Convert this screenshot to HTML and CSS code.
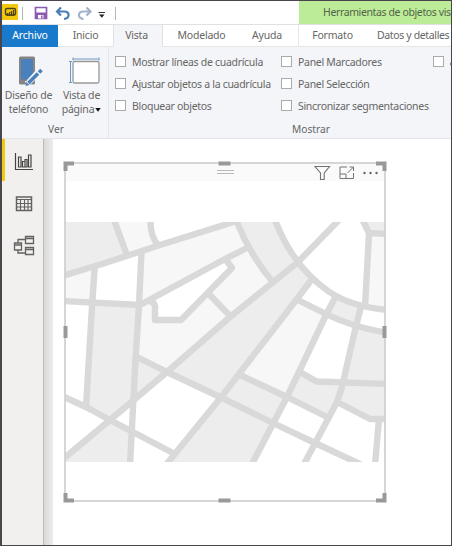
FILE: index.html
```html
<!DOCTYPE html>
<html lang="es">
<head>
<meta charset="utf-8">
<title>Vista de informe</title>
<link rel="stylesheet" href="styles.css">
</head>
<body>
<div class="window">
  <header class="titlebar">
    <div class="quick">
      <svg width="118" height="24" viewBox="0 0 118 24">
        <rect x="0" y="3" width="16" height="16" fill="#f2c811"/>
        <rect x="3.500" y="7.500" width="10" height="6.500" rx="1.500" fill="none" stroke="#4b4216" stroke-width="1.400"/>
        <path d="M5.500 15V12M7.500 15V11M9.500 15V10M11.500 15V9" stroke="#4b4216" stroke-width="1.300"/>
        <path d="M20.500 6v13M113.500 6v13" stroke="#b5b5b5"/>
        <path d="M33.500 6.500h11v11h-11z" fill="#fff" stroke="#8b5bb0" stroke-width="1.700"/>
        <path d="M33.500 11.500h11v6h-11z" fill="#8b5bb0"/><path d="M36 14h5.500v3.500H36z" fill="#fff"/><path d="M39 14.500h1.500v3H39z" fill="#8b5bb0"/>
        <path d="M59 6.500L55 10.500L59 14.500M55.500 10.500H62.500C68 10.500 68 17.500 62 18" fill="none" stroke="#4a7fb5" stroke-width="2.200"/>
        <path d="M84.500 6.500L88.500 10.500L84.500 14.500M88 10.500H81C75.500 10.500 75.500 17.500 81.500 18" fill="none" stroke="#a3b3c9" stroke-width="2.200"/>
        <path d="M96.500 11.500h6.500" stroke="#333"/><path d="M97 13.500h5.500l-2.700 3.300z" fill="#222"/>
      </svg>
    </div>
    <div class="context">Herramientas de objetos vis</div>
  </header>
  <nav class="tabs">
    <span class="tab file">Archivo</span>
    <span class="tab home">Inicio</span>
    <span class="tab view">Vista</span>
    <span class="tab model">Modelado</span>
    <span class="tab help">Ayuda</span>
    <span class="tab format">Formato</span>
    <span class="tab data">Datos y detalles</span>
  </nav>
  <section class="ribbon">
    <div class="group see">
      <div class="bigs">
        <div class="big phone">
          <svg width="28" height="34" viewBox="0 0 28 34">
            <rect x="4" y="2.500" width="16" height="28" rx="1.500" fill="#858585"/>
            <rect x="6" y="5" width="12" height="20.500" fill="#4a80bb"/>
            <rect x="10" y="27" width="4" height="1.500" fill="#ddd"/>
            <path d="M10 33l2-7L23 14l5 4L16 30z" fill="#f4f5f8"/>
            <path d="M13.500 29L23 19.500" stroke="#4a80bb" stroke-width="3.600"/><path d="M24 18.500l2.500-2.500" stroke="#4a80bb" stroke-width="3.600"/><path d="M10.500 32l1-4 3 3z" fill="#4a80bb"/>
          </svg>
          <span>Diseño de</span><span>teléfono</span>
        </div>
        <div class="big page">
          <svg class="pageicon" width="32" height="34" viewBox="0 0 32 34">
            <rect x="4" y="7.500" width="26" height="21.500" rx="1.500" fill="#fff" stroke="#999" stroke-width="1.300"/>
            <path d="M4 5h26M4 3.500v3M30 3.500v3M1.500 7.500v21M0 7.500h3M0 28.500h3" stroke="#6a98c8"/>
          </svg>
          <span>Vista de</span><span class="drop">página<svg class="caret" width="6" height="4" viewBox="0 0 6 4"><path d="M.3 0h5.400L3 3.700z" fill="#111"/></svg></span>
        </div>
      </div>
      <div class="caption ver">Ver</div>
    </div>
    <div class="group show">
      <div class="checks">
        <div class="col">
          <label><b></b><i>Mostrar líneas de cuadrícula</i></label>
          <label><b></b><i>Ajustar objetos a la cuadrícula</i></label>
          <label><b></b><i>Bloquear objetos</i></label>
        </div>
        <div class="col second">
          <label><b></b><i>Panel Marcadores</i></label>
          <label><b></b><i>Panel Selección</i></label>
          <label><b></b><i>Sincronizar segmentaciones</i></label>
        </div>
        <div class="col third"><label><b></b><svg width="3" height="10" viewBox="0 0 3 10"><path d="M-.5 9L2 4" stroke="#666"/></svg></label></div>
      </div>
      <div class="caption mostrar">Mostrar</div>
    </div>
  </section>
  <main class="body">
    <aside class="rail">
      <div class="item active">
        <svg width="20" height="20" viewBox="0 0 20 20" fill="none" stroke="#444" stroke-width="1.200"><path d="M1.500 1v16.500H19"/><path d="M4.500 5h2.500v10H4.500zM8.500 9.500H11V15H8.500zM11 7.500h2V15h-2zM14.500 3H17v12h-2.500z"/></svg>
      </div>
      <div class="item">
        <svg width="20" height="20" viewBox="0 0 20 20" fill="none" stroke="#626262"><path d="M2.500 3h15v13.500h-15z" stroke-width="1.500"/><path d="M2.500 5.500h15M2.500 9.500h15M2.500 13h15M6.500 5.500v11M10.500 5.500v11M14 5.500v11" stroke-width="1.100"/></svg>
      </div>
      <div class="item">
        <svg width="22" height="22" viewBox="0 0 22 22" fill="none" stroke="#626262" stroke-width="1.300"><path d="M1.500 8h7v7h-7zM1.500 10h7M12.500 1.500h8v7h-8zM12.500 3.500h8M12.500 12.500h8v7h-8zM12.500 14.500h8M5 8V4.500h7.500M5 15v3h7.500"/></svg>
      </div>
    </aside>
    <div class="gutter"></div>
    <div class="canvas">
      <div class="visual">
        <div class="vhead">
          <div class="grip"></div>
          <svg class="tools" width="66" height="16" viewBox="0 0 66 16" fill="none" stroke="#737373">
            <path d="M1 1.500h14.500L10.200 8v6.500H6.500V8z" stroke-width="1.100"/>
            <path d="M33 2H26v11.500h13.500V8M35.500 2h4v4M39.200 2.300L33.500 8M26 9h6v4.500"/>
            <g fill="#666" stroke="none"><circle cx="50.500" cy="8" r="1.200"/><circle cx="56.500" cy="8" r="1.200"/><circle cx="62.500" cy="8" r="1.200"/></g>
          </svg>
        </div>
        <svg class="map" width="320" height="240" viewBox="65 222 320 240">
          <g fill="#ededed">
            <path d="M65 222h50l12 33L65 275z"/>
            <path d="M92 305L139 305L133 400L110 420L86 407z"/>
            <path d="M65 458L110 420L131 432L130 462H65z"/>
            <path d="M136 358L167 372L134 400z"/>
            <path d="M237 222H275L297 263L272 281L248 248z"/>
            <path d="M297 263L312 280L220 397L167 372z"/>
            <path d="M240 374L287 397L273 423L220 397z"/>
            <path d="M220 397L273 423L253 462H167z"/>
            <path d="M335 297L361 307L357 327L327 314z"/>
            <path d="M357 327L385 333V384L342 383z"/>
            <path d="M301 373L317 381L342 382L337 402L327 417L287 397z"/>
            <path d="M342 383L385 384V419H370L337 402z"/>
            <path d="M363 222H385V234L369 233z"/>
          </g>
          <g fill="#f7f7f7">
            <path d="M115 222H150L157 244L127 255z"/>
            <path d="M65 275L94 267L92 305L65 301z"/>
            <path d="M142 251L235 222L248 248L140 305z"/>
            <path d="M140 305L153 302L155 320H181L208 293L230 317L167 372L136 358z"/>
            <path d="M227 260L248 248L272 281L232 316L208 293L233 268z"/>
            <path d="M300 300L327 313L287 397L240 374L288 310z"/>
            <path d="M369 233L385 234V310L365 307z"/>
          </g>
          <g fill="none" stroke="#d9d9d9" stroke-width="6.400" stroke-linejoin="round">
            <path d="M62 276L102 264L160 245L240 220"/>
            <path d="M114 220L127 255"/>
            <path d="M150.500 220Q150 236 158 245"/>
            <path d="M141.500 252L139 305L135.500 360L130 465"/>
            <path d="M94.700 267L92 307L86 407"/>
            <path d="M62 301L140 305L225 259L247 248"/>
            <path d="M150 301Q156 303 155 309V320H181L232 268L226 260"/>
            <path d="M208 293L231 317"/>
            <path d="M236 220Q250 255 272 281"/>
            <path d="M275 220C286 249 304 274 328 291C344 302 364 308 388 310"/>
            <path d="M339 220L297 263L272 283L230 317L167 372L110 420L62 460"/>
            <path d="M312 279L297 299L222 396L165 466"/>
            <path d="M362 219L369 233L365 307M369 233L388 234"/>
            <path d="M361 307L355 330L342 387L337 402L303 466"/>
            <path d="M298 300L326 314Q352 327 388 333"/>
            <path d="M336 296L327 313L287 397L251 466"/>
            <path d="M300 372L316.500 381.500L388 384"/>
            <path d="M240 375L287 397L327 417"/>
            <path d="M137 357L167 372L220 397L273 423L315 443L362 465"/>
            <path d="M337 402L370 419H388"/>
            <path d="M379 419L375 465"/>
            <path d="M62 396L86 407L110 420L173 453"/>
          </g>
        </svg>
        <svg class="frame" width="324" height="342" viewBox="0 0 324 342">
          <rect x="2" y="2" width="320" height="338" fill="none" stroke="#cfcfcf" stroke-width="1.700"/>
          <path d="M2.500 10V2.500H11M313 2.500h8.500V10M321.500 332v7.500H313M11 339.500H2.500V332M155.500 2.500h12M155.500 339.500h12M2.500 165v12M321.500 165v12" fill="none" stroke="#999" stroke-width="4"/>
        </svg>
      </div>
    </div>
  </main>
</div>
</body>
</html>
```
FILE: styles.css
```css
* { box-sizing: border-box; }
body { margin: 0; background: #fff; font-family: "Noto Sans", "Open Sans", sans-serif; font-size: 10.500px; letter-spacing: -.2px; color: #666; }
i { font-style: normal; white-space: nowrap; }
svg { display: block; flex: none; }
.window { width: 452px; height: 546px; border: 1px solid #48464a; border-left-width: 2px; overflow: hidden; display: flex; flex-direction: column; }
.titlebar { height: 23px; display: flex; flex: none; }
.quick { width: 297px; height: 23px; flex: none; }
.context { flex: 1; background: #bdec98; padding-left: 24px; line-height: 23px; white-space: nowrap; color: #526449; letter-spacing: -.38px; }
.tabs { height: 23px; flex: none; display: flex; border-top: 1px solid #e1e1e3; background: #fff; }
.tab { display: flex; flex: none; justify-content: center; line-height: 21px; white-space: nowrap; border-bottom: 1px solid #e6e6e8; }
.file { width: 56px; background: #1979ca; color: #fff; border-color: #1979ca; }
.home { width: 55px; }
.view { width: 50px; padding-right: 3px; background: #f4f5f8; border: solid #e1e1e3; border-width: 0 1px; }
.model { width: 77px; }
.help { width: 59px; padding-right: 4px; border-right: 1px solid #e8e8e8; }
.format { width: 69px; padding-right: 2px; }
.data { width: 83px; justify-content: flex-start; padding-left: 9px; letter-spacing: -.36px; }
.ribbon { height: 92px; flex: none; background: #f4f5f8; border-bottom: 1px solid #e3e4e6; display: flex; }
.group { display: flex; flex-direction: column; }
.see { width: 107px; border-right: 1px solid #e6e7ea; }
.bigs { display: flex; height: 76px; padding-top: 7px; }
.big { display: flex; flex-direction: column; align-items: center; line-height: 14px; white-space: nowrap; }
.phone { width: 54px; }
.page { width: 54px; }
.pageicon { margin-left: 6px; }
.drop { display: flex; align-items: center; }
.caret { margin: 1px 0 0 1px; }
.caption { line-height: 13px; font-size: 10.200px; letter-spacing: 0; }
.ver { padding-left: 46px; }
.show { flex: 1; padding-left: 6px; }
.checks { display: flex; height: 76px; padding-top: 4px; }
.col { width: 166px; flex: none; letter-spacing: -.3px; }
.second { width: 152px; }
.third { width: 17px; }
label { display: flex; align-items: center; height: 22px; }
label b { width: 11px; height: 11px; border: 1px solid #aaa; background: #fff; margin: -1px 6px 0 0; flex: none; }
.mostrar { padding-left: 177px; }
.body { flex: 1; display: flex; min-height: 0; }
.rail { width: 41px; background: #f2f0ee; flex: none; }
.item { height: 42px; display: flex; align-items: center; justify-content: center; padding-top: 3px; border-left: 3px solid transparent; }
.active { border-color: #f2c811; }
.gutter { width: 10px; flex: none; border-left: 1px solid #b8babb; background: linear-gradient(90deg, #d9d9d9, #ececec); }
.canvas { flex: 1; padding: 22px 0 0 10px; background: #fff; }
.visual { width: 324px; height: 342px; position: relative; padding: 2px; }
.vhead { height: 18px; background: #fafafa; display: flex; justify-content: space-between; padding-left: 152px; }
.grip { width: 17px; height: 4px; margin-top: 7px; border: solid #b9b9b9; border-width: 1px 0; }
.tools { margin: 2px 5px 0 0; }
.map { margin-top: 41px; }
.frame { position: absolute; left: 0; top: 0; }
```
